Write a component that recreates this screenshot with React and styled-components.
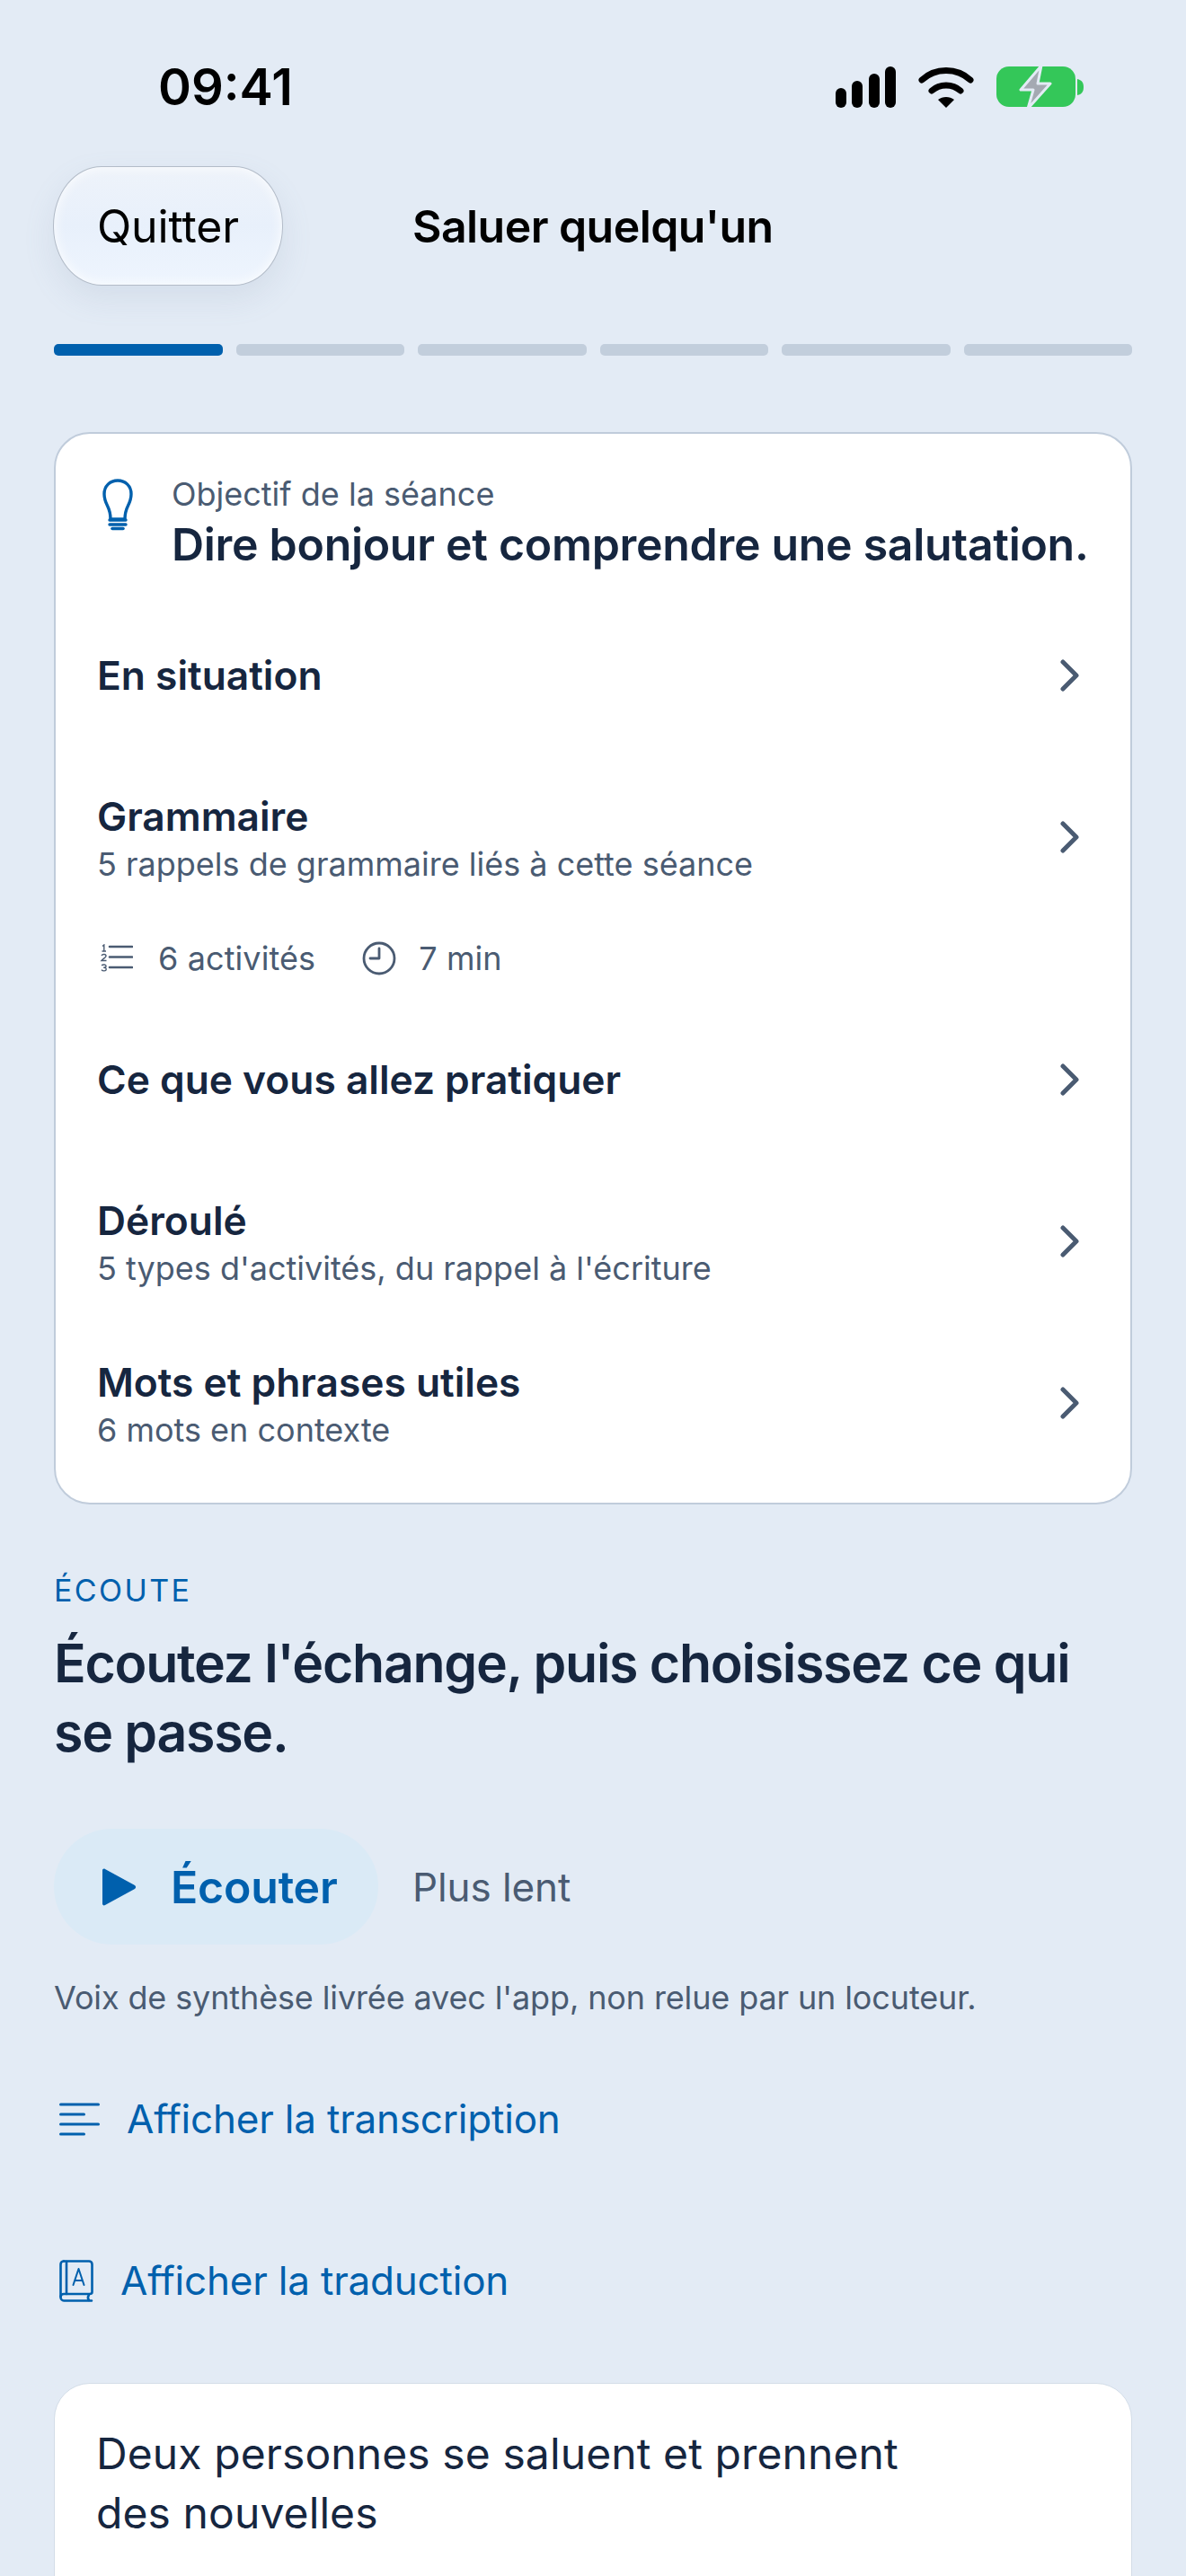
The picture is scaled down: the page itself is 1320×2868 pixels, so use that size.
import React from "react";
import styled, { createGlobalStyle } from "styled-components";

const Global = createGlobalStyle`
  html, body { margin: 0; padding: 0; background: #e3ebf5; }
  body { font-family: Inter, "Liberation Sans", sans-serif; -webkit-font-smoothing: antialiased; }
  * { box-sizing: border-box; }
`;

const Page = styled.div`
  width: 1320px; height: 2868px; overflow: hidden; background: #e3ebf5;
  padding: 0 60px;
`;
const StatusBar = styled.div`
  height: 185px; margin: 0 -60px; padding: 64px 113px 0 176px;
  display: flex; justify-content: space-between; align-items: flex-start;
`;
const Time = styled.div`
  font-size: 56px; line-height: 66px; font-weight: 600; color: #000;
`;
const StatusIcons = styled.div`
  display: flex; align-items: center; gap: 25px; height: 66px;
`;
const Header = styled.div`
  display: flex; align-items: center; height: 133px; gap: 144px; margin-left: -1px;
`;
const QuitButton = styled.button`
  width: 256px; height: 133px; border-radius: 54px / 66px;
  border: 1.5px solid #b3bcc8;
  background: linear-gradient(180deg, #eef3fa 0%, #e8f0fb 50%, #eef5fe 100%);
  box-shadow: 0 14px 34px rgba(120,140,170,0.14), inset 0 0 14px rgba(255,255,255,0.9);
  font: 400 50px Inter, sans-serif; color: #000; padding: 0; letter-spacing: -0.1px;
`;
const HeaderTitle = styled.div`
  font-size: 50px; font-weight: 600; color: #000; letter-spacing: -0.57px;
`;
const Progress = styled.div`
  display: grid; grid-template-columns: repeat(6, 1fr); gap: 15px; margin-top: 65px;
`;
const Segment = styled.div`
  height: 13px; border-radius: 5px;
  background: ${(p) => (p.$active ? "#0060ad" : "#c2cedc")};
`;
const Card = styled.div`
  margin-top: 85px; height: 1194px; background: #fff; border: 2.5px solid #c0ccdb;
  border-radius: 40px; padding: 0 46px; display: flex; flex-direction: column;
`;
const Goal = styled.div`
  display: flex; gap: 39px; padding-top: 45px; height: 179px; flex: none;
`;
const GoalIcon = styled.div`
  width: 38px; padding-top: 5px; margin-left: 6px; flex: none;
`;
const GoalText = styled.div`
  display: flex; flex-direction: column; white-space: nowrap;
`;
const GoalLabel = styled.div`
  font-size: 36px; line-height: 44px; color: #4a5b72;
`;
const GoalTitle = styled.div`
  font-size: 50px; line-height: 66px; font-weight: 600; color: #16263f; letter-spacing: -0.3px; margin-top: 1px;
`;
const Row = styled.div`
  height: 180px; flex: none; display: flex; align-items: center; justify-content: space-between;
`;
const RowText = styled.div`
  display: flex; flex-direction: column; padding-top: 5px;
`;
const RowTitle = styled.div`
  font-size: 44.300px; line-height: 54px; font-weight: 600; color: #16263f;
`;
const RowSub = styled.div`
  font-size: 36px; line-height: 52px; color: #4a5b72;
`;
const Meta = styled.div`
  height: 90px; flex: none; display: flex; align-items: center; font-size: 36px; color: #4a5b72; letter-spacing: 0.1px;
`;
const MetaIcon = styled.div`
  display: flex; margin-right: ${(p) => p.$gap}px; margin-left: ${(p) => p.$left || 0}px;
`;
const Eyebrow = styled.div`
  margin-top: 72px; font-size: 34px; line-height: 48px; letter-spacing: 2.4px; color: #0060ad;
`;
const Heading = styled.h1`
  margin: 18px 0 0; font-size: 59px; line-height: 77px; font-weight: 600; color: #16263f; letter-spacing: -1.27px;
`;
const ListenRow = styled.div`
  display: flex; align-items: center; margin-top: 69px; gap: 38px;
`;
const ListenButton = styled.div`
  width: 361px; height: 129px; border-radius: 65px; background: #daeaf6;
  display: flex; align-items: center; padding-left: 54px; gap: 38px;
  font-size: 50px; font-weight: 600; color: #0060ad; letter-spacing: -0.2px;
`;
const Slower = styled.div`
  font-size: 44px; color: #4a5b72; letter-spacing: -0.1px;
`;
const Note = styled.div`
  margin-top: 35px; font-size: 36px; line-height: 48px; color: #4a5b72; letter-spacing: -0.13px;
`;
const LinkRow = styled.div`
  display: flex; align-items: center; color: #0060ad; font-size: 44px; letter-spacing: -0.2px;
  margin-top: ${(p) => p.$top}px; height: 60px; gap: 30px; padding-left: 6px;
`;
const SceneCard = styled.div`
  margin-top: 84px; height: 400px; background: #fff; border: 1.5px solid #d3dde8;
  border-radius: 40px; padding: 45px 46px 0; font-size: 48px; line-height: 66px; color: #16263f; letter-spacing: 0.1px;
`;

const Chevron = () => (
  <svg width="24" height="36" viewBox="0 0 24 36" fill="none" stroke="#4a5b72" strokeWidth="5" strokeLinecap="round" strokeLinejoin="round" style={{ marginRight: 9 }}>
    <path d="M4 3l15 15L4 33" />
  </svg>
);
const Signal = () => (
  <svg width="67" height="46" viewBox="0 0 67 46" fill="#000">
    <rect x="0" y="24" width="12" height="22" rx="6" />
    <rect x="18" y="16" width="12" height="30" rx="6" />
    <rect x="37" y="8" width="12" height="38" rx="6" />
    <rect x="55" y="0" width="12" height="46" rx="6" />
  </svg>
);
const Wifi = () => (
  <svg width="62" height="46" viewBox="0 0 62 46" fill="none" stroke="#000" strokeWidth="7" strokeLinecap="round">
    <path d="M4 15C19 1 43 1 58 15" />
    <path d="M15 27c9-8 23-8 32 0" />
    <path d="M31 46l-9-9c5-4 13-4 18 0z" fill="#000" stroke="none" />
  </svg>
);
const Battery = () => (
  <svg width="98" height="48" viewBox="0 0 98 48">
    <rect x="0" y="1" width="88" height="45" rx="14" fill="#34c759" />
    <path d="M90 15c5 1 7 4 7 9s-2 8-7 9z" fill="#34c759" />
    <path d="M50 0L27 27h14l-6 21L60 20H46z" fill="#a4a9b2" stroke="#e3ebf5" strokeWidth="3" strokeLinejoin="round" />
  </svg>
);
const Bulb = () => (
  <svg width="34" height="58" viewBox="0 0 34 58" fill="none" stroke="#0060ad" strokeWidth="3.4" strokeLinecap="round" strokeLinejoin="round">
    <path d="M9 45c0-7-1.500-11-3.500-15C3.500 26 2 22 2 17 2 8 8.500 2 17 2s15 6 15 15c0 5-1.500 9-3.500 13-2 4-3.500 8-3.500 15z" />
    <path d="M8 46h18" />
    <path d="M8 51h18" />
    <path d="M11 55.500h12" strokeWidth="3.600" />
  </svg>
);
const NumberedList = () => (
  <svg width="37" height="32" viewBox="0 0 37 32">
    <path d="M11 3h25M11 14.500h25M11 26h25" stroke="#4a5b72" strokeWidth="2.600" strokeLinecap="round" fill="none" />
    <path d="M3 2.500L4.800 1v7M2.500 8h4.500" stroke="#4a5b72" strokeWidth="1.400" fill="none" />
    <path d="M2 13c1-2 5-2 5 .5 0 1.500-3 2.500-5 5h5.500" stroke="#4a5b72" strokeWidth="1.400" fill="none" />
    <path d="M2.200 24c1-1.500 5-1.500 4.800.7 0 1.300-2 1.500-2.800 1.500 1.500 0 3.200.5 3 2 0 2-4 2.300-5.200.5" stroke="#4a5b72" strokeWidth="1.400" fill="none" />
  </svg>
);
const Clock = () => (
  <svg width="38" height="38" viewBox="0 0 38 38" fill="none" stroke="#4a5b72" strokeWidth="2.800" strokeLinecap="round" strokeLinejoin="round">
    <circle cx="19" cy="19" r="17" />
    <path d="M19 8v11H9" />
  </svg>
);
const Play = () => (
  <svg width="38" height="42" viewBox="0 0 38 42">
    <path d="M3 1l33 18c1.500 1 1.500 3 0 4L3 41c-1.500 1-3 0-3-1.500v-37C0 1 1.500 0 3 1z" fill="#0060ad" />
  </svg>
);
const TextLines = () => (
  <svg width="45" height="37" viewBox="0 0 45 37" stroke="#0060ad" strokeWidth="3" strokeLinecap="round" fill="none">
    <path d="M1.500 2h42M1.500 13h26M1.500 24h42M1.500 35h26" />
  </svg>
);
const Dictionary = () => (
  <svg width="38" height="47" viewBox="0 0 38 47" fill="none" stroke="#0060ad" strokeWidth="2.600" strokeLinejoin="round" strokeLinecap="round">
    <path d="M5 1.500h28c2 0 3.500 1.500 3.500 3.500v31c0 1.500-1 2-3 2H5c-2 0-3.500 1.500-3.500 3.500S3 45.500 5 45.500h31" />
    <path d="M1.500 41V5C1.500 3 3 1.500 5 1.500" />
    <path d="M8 2v36" />
    <path d="M33 39c-1.500 2-1.500 4 0 6" />
    <path d="M15.500 28L21.500 10l6 18M17.500 23h8" strokeWidth="2" />
  </svg>
);

export default function App() {
  return (
    <Page>
      <Global />
      <StatusBar>
        <Time>09:41</Time>
        <StatusIcons>
          <Signal />
          <Wifi />
          <Battery />
        </StatusIcons>
      </StatusBar>
      <Header>
        <QuitButton>Quitter</QuitButton>
        <HeaderTitle>Saluer quelqu'un</HeaderTitle>
      </Header>
      <Progress>
        {[0, 1, 2, 3, 4, 5].map((i) => (
          <Segment key={i} $active={i === 0} />
        ))}
      </Progress>
      <Card>
        <Goal>
          <GoalIcon><Bulb /></GoalIcon>
          <GoalText>
            <GoalLabel>Objectif de la séance</GoalLabel>
            <GoalTitle>Dire bonjour et comprendre une salutation.</GoalTitle>
          </GoalText>
        </Goal>
        <Row>
          <RowTitle>En situation</RowTitle>
          <Chevron />
        </Row>
        <Row>
          <RowText>
            <RowTitle>Grammaire</RowTitle>
            <RowSub>5 rappels de grammaire liés à cette séance</RowSub>
          </RowText>
          <Chevron />
        </Row>
        <Meta>
          <MetaIcon $gap={28} $left={3}><NumberedList /></MetaIcon>
          6 activités
          <MetaIcon $gap={25} $left={52}><Clock /></MetaIcon>
          7 min
        </Meta>
        <Row>
          <RowTitle>Ce que vous allez pratiquer</RowTitle>
          <Chevron />
        </Row>
        <Row>
          <RowText>
            <RowTitle>Déroulé</RowTitle>
            <RowSub>5 types d'activités, du rappel à l'écriture</RowSub>
          </RowText>
          <Chevron />
        </Row>
        <Row>
          <RowText>
            <RowTitle>Mots et phrases utiles</RowTitle>
            <RowSub>6 mots en contexte</RowSub>
          </RowText>
          <Chevron />
        </Row>
      </Card>
      <Eyebrow>ÉCOUTE</Eyebrow>
      <Heading>Écoutez l'échange, puis choisissez ce qui se passe.</Heading>
      <ListenRow>
        <ListenButton><Play />Écouter</ListenButton>
        <Slower>Plus lent</Slower>
      </ListenRow>
      <Note>Voix de synthèse livrée avec l'app, non relue par un locuteur.</Note>
      <LinkRow $top={81}><TextLines />Afficher la transcription</LinkRow>
      <LinkRow $top={120}><Dictionary />Afficher la traduction</LinkRow>
      <SceneCard>Deux personnes se saluent et prennent<br />des nouvelles</SceneCard>
    </Page>
  );
}
